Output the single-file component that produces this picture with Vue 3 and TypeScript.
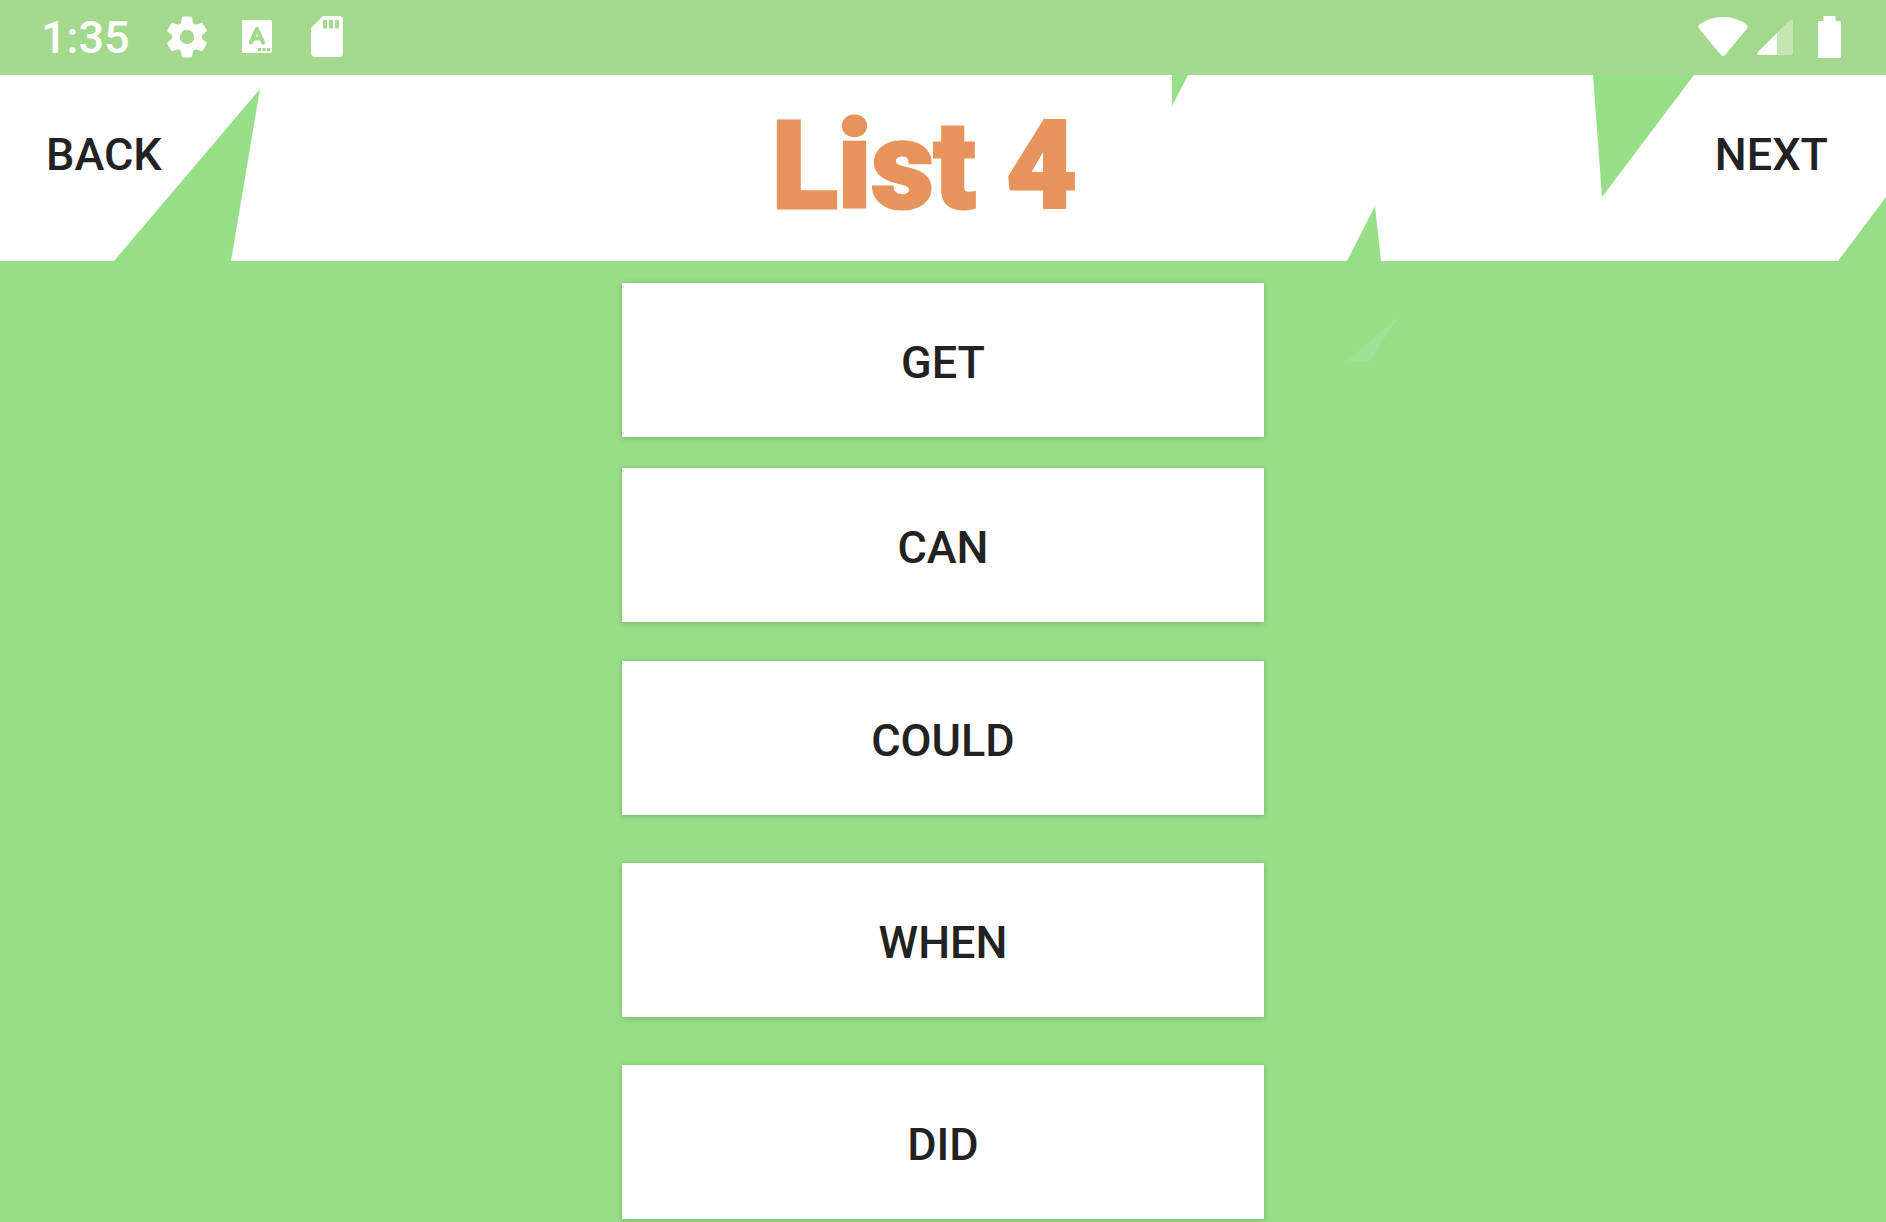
<script setup lang="ts">
const title = 'List 4'
const words: string[] = ['GET', 'CAN', 'COULD', 'WHEN', 'DID']
</script>

<template>
  <div class="screen">
    <div class="status">
      <div class="status-group">
        <time class="clock">1:35</time>
        <svg class="icon gear" viewBox="0 0 40 42" width="40" height="42" aria-hidden="true">
          <g fill="#fff">
            <circle cx="20" cy="21" r="15" />
            <path v-for="angle in [0, 60, 120, 180, 240, 300]" :key="angle" d="M15 1.500Q15.200 .5 16.500 .5H23.500Q24.800 .5 25 1.500L26.500 9H13.500Z" :transform="`rotate(${angle} 20 21)`" />
          </g>
          <circle cx="20" cy="21" r="7.200" fill="#a4d98d" />
        </svg>
        <svg class="icon dict" viewBox="0 0 30 33" width="30" height="33" aria-hidden="true">
          <rect width="30" height="33" rx="1.500" fill="#fff" />
          <path d="M9 22.500 L15 9 L21 22.500 M11 18.500H19" fill="none" stroke="#a4d98d" stroke-width="4.200" stroke-linecap="round" stroke-linejoin="round" />
          <path d="M16 28h3v3h-3zM20.500 28h3v3h-3zM25 28h3v3h-3z" fill="#a4d98d" />
        </svg>
        <svg class="icon card" viewBox="0 0 32 41" width="32" height="41" aria-hidden="true">
          <path d="M12 0H28Q32 0 32 4V37Q32 41 28 41H4Q0 41 0 37V12Z" fill="#fff" />
          <path d="M12 4h4v8.500h-4zM18 4h4v8.500h-4zM24 4h4v8.500h-4z" fill="#a4d98d" />
        </svg>
      </div>
      <div class="status-group">
        <svg class="icon" viewBox="0 0 50 40" width="50" height="40" aria-hidden="true">
          <path d="M1 8Q11 0 25 0Q39 0 49 8Q50.500 9.500 49 11.500L27 38Q25 40.500 23 38L1 11.500Q-.5 9.500 1 8Z" fill="#fff" />
        </svg>
        <svg class="icon signal" viewBox="0 0 36 36" width="36" height="36" aria-hidden="true">
          <path d="M20 14L33 1Q36 -1 36 2V34Q36 36 34 36H20Z" fill="#c3e6b3" />
          <path d="M20 14V36H2Q-1 35.500 1 33Z" fill="#fff" />
        </svg>
        <svg class="icon battery" viewBox="0 0 23 42" width="23" height="42" aria-hidden="true">
          <path d="M5.500 0H17.500V5H21.500Q23 5 23 6.500V40.500Q23 42 21.500 42H1.500Q0 42 0 40.500V6.500Q0 5 1.500 5H5.500Z" fill="#fff" />
        </svg>
      </div>
    </div>

    <header class="header">
      <svg class="shards" viewBox="0 0 1886 186" preserveAspectRatio="none" aria-hidden="true">
        <g fill="#96de88">
          <path d="M260 14L231 186H114Z" />
          <path d="M1172 0H1188L1172 31Z" />
          <path d="M1375 131L1381 186H1347Z" />
          <path d="M1593 0H1694L1602 122Z" />
          <path d="M1886 122V186H1838Z" />
        </g>
        <path d="M1400 240L1370 286H1347Z" fill="#a0e093" />
      </svg>
      <button class="nav back" type="button">BACK</button>
      <h1 class="title">{{ title }}</h1>
      <button class="nav next" type="button">NEXT</button>
    </header>

    <main class="words">
      <button v-for="word in words" :key="word" class="word" type="button">{{ word }}</button>
    </main>
  </div>
</template>

<style>
body {
  margin: 0;
  background: #96de88;
}
</style>

<style scoped>
.screen {
  min-height: 100vh;
  box-sizing: border-box;
  background: #96de88;
  font-family: Roboto, "Liberation Sans", sans-serif;
}

.status {
  display: flex;
  justify-content: space-between;
  box-sizing: border-box;
  height: 75px;
  padding: 0 45px 2px 41px;
  background: #a4d98d;
}

.status-group {
  display: flex;
  align-items: center;
}

.clock {
  padding-top: 3px;
  color: #fff;
  font-size: 45px;
  font-weight: 500;
  line-height: 76px;
}

.icon {
  display: block;
  flex: none;
}

.gear {
  margin-left: 37px;
}

.dict {
  margin-left: 35px;
}

.card {
  margin-left: 39px;
}

.signal {
  margin-left: 9px;
}

.battery {
  margin-left: 25px;
}

.header {
  position: relative;
  display: flex;
  justify-content: space-between;
  align-items: flex-start;
  height: 186px;
  background: #fff;
}

.shards {
  position: absolute;
  inset: 0;
  width: 100%;
  height: 100%;
  overflow: visible;
  pointer-events: none;
}

.nav,
.word {
  border: 0;
  color: #222;
  font-family: inherit;
  font-size: 45px;
  font-weight: 500;
  cursor: pointer;
}

.nav {
  position: relative;
  height: 158px;
  background: transparent;
}

.back {
  padding: 0 30px 0 46px;
}

.next {
  padding: 0 58px;
}

.title {
  position: relative;
  margin: 0;
  color: #e6945b;
  font-size: 122px;
  font-weight: 900;
  line-height: 184px;
  -webkit-text-stroke: 3px #e6945b;
}

.words {
  display: flex;
  flex-direction: column;
  align-items: center;
  padding-top: 22px;
}

.word {
  width: 34%;
  height: 154px;
  padding: 4px 0 0;
  background: #fff;
  box-shadow: 0 1px 6px rgba(0, 0, 0, 0.2);
}

.word + .word {
  margin-top: 31px;
}

.word:nth-child(3) {
  margin-top: 39px;
}

.word:nth-child(n + 4) {
  margin-top: 48px;
}
</style>
